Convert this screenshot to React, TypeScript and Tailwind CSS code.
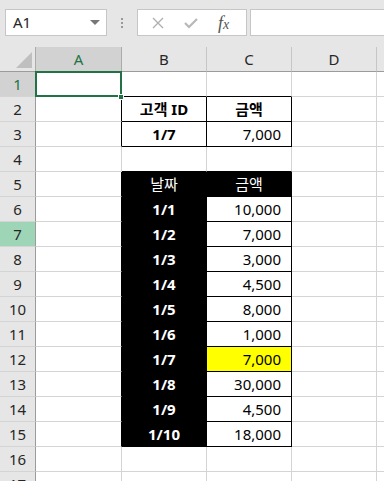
import React from "react";

const COLS = ["A", "B", "C", "D"];
const COL_W = [86, 85, 85, 85];
const ROW_COUNT = 16;

type Cell = { text?: string; bold?: boolean; align?: "center" | "right"; bg?: string; white?: boolean };

const data: Record<string, Cell> = {
  B2: { text: "고객 ID", bold: true, align: "center" },
  C2: { text: "금액", bold: true, align: "center" },
  B3: { text: "1/7", bold: true, align: "center" },
  C3: { text: "7,000", align: "right" },
  B5: { text: "날짜", align: "center", white: true },
  C5: { text: "금액", align: "center", white: true },
};

const dates = ["1/1", "1/2", "1/3", "1/4", "1/5", "1/6", "1/7", "1/8", "1/9", "1/10"];
const amounts = ["10,000", "7,000", "3,000", "4,500", "8,000", "1,000", "7,000", "30,000", "4,500", "18,000"];
dates.forEach((d, i) => {
  data["B" + (i + 6)] = { text: d, bold: true, align: "center", white: true };
  data["C" + (i + 6)] = { text: amounts[i], align: "right", bg: i === 6 ? "yellow" : undefined };
});

// c: 0=A .. 3=D, 4=E
const bordered = (r: number, c: number) =>
  (r >= 2 && r <= 3 && (c === 1 || c === 2)) || (r >= 6 && r <= 15 && c === 2);
const black = (r: number, c: number) =>
  (r === 5 && (c === 1 || c === 2)) || (r >= 6 && r <= 15 && c === 1);
const dark = (r: number, c: number) => bordered(r, c) || black(r, c);

function GridCell({ r, c }: { r: number; c: number }) {
  const key = COLS[c] + r;
  const cell = data[key] || {};
  const rightBlack = dark(r, c) || dark(r, c + 1);
  const bottomBlack = dark(r, c) || dark(r + 1, c);
  return (
    <div
      className={[
        "h-[25px] shrink-0 flex items-center border-r border-b text-[15px] leading-none",
        rightBlack ? "border-r-black" : "border-r-[#d4d4d4]",
        bottomBlack ? "border-b-black" : "border-b-[#d4d4d4]",
        black(r, c) ? "bg-black text-white" : cell.bg === "yellow" ? "bg-[#ffff00] text-black" : "bg-white text-black",
        cell.align === "right" ? "justify-end pr-[10px]" : "justify-center",
        cell.bold ? "font-bold" : "font-normal",
      ].join(" ")}
      style={{ width: COL_W[c] }}
    >
      {cell.text}
    </div>
  );
}

function Row({ r }: { r: number }) {
  const selected = r === 1;
  const green = r === 7;
  return (
    <div className="flex">
      <div
        className={[
          "w-[36px] h-[25px] shrink-0 flex items-center justify-center border-r border-r-[#9b9b9b] border-b border-b-[#d4d4d4] text-[15px]",
          selected ? "bg-[#d2d2d2] text-[#217346]" : green ? "bg-[#9fd5b7] text-[#262626]" : "bg-[#e6e6e6] text-[#262626]",
        ].join(" ")}
      >
        {r}
      </div>
      {COLS.map((_, c) => (
        <GridCell key={c} r={r} c={c} />
      ))}
      <div className="flex-1 h-[25px] border-b border-b-[#d4d4d4] bg-white" />
    </div>
  );
}

export default function App() {
  return (
    <div
      className="w-[384px] h-[481px] overflow-hidden bg-[#e6e6e6] relative"
      style={{ fontFamily: '"Noto Sans", "Noto Sans CJK KR", sans-serif' }}
    >
      {/* formula bar */}
      <div className="h-[47px] flex items-start pt-[9px] pl-[5px]">
        <div className="w-[102px] h-[27px] bg-white border border-[#c6c6c6] flex items-center justify-between pl-[7px] pr-[6px]">
          <span className="text-[15px] text-[#262626]">A1</span>
          <span className="w-0 h-0 border-l-[5px] border-r-[5px] border-t-[5px] border-l-transparent border-r-transparent border-t-[#777]" />
        </div>
        <div className="w-[30px] h-[27px] flex flex-col items-center justify-center gap-[2px]">
          <span className="w-[2px] h-[2px] bg-[#999]" />
          <span className="w-[2px] h-[2px] bg-[#999]" />
          <span className="w-[2px] h-[2px] bg-[#999]" />
        </div>
        <div className="w-[110px] h-[27px] bg-white border border-[#c6c6c6] flex items-center">
          <svg width="12" height="12" viewBox="0 0 12 12" className="ml-[14px]">
            <path d="M1 1 L11 11 M11 1 L1 11" stroke="#b0b0b0" strokeWidth="1.4" fill="none" />
          </svg>
          <svg width="14" height="12" viewBox="0 0 14 12" className="ml-[20px]">
            <path d="M1 6 L5 10 L13 2" stroke="#b8b8b8" strokeWidth="2.2" fill="none" />
          </svg>
          <span
            className="ml-[20px] text-[18px] italic text-[#555] leading-none"
            style={{ fontFamily: '"Liberation Serif", serif' }}
          >
            f<span className="text-[14px]">x</span>
          </span>
        </div>
        <div className="ml-[3px] flex-1 h-[27px] bg-white border border-[#c6c6c6] border-r-0" />
      </div>

      {/* column headers */}
      <div className="flex h-[25px]">
        <div className="w-[36px] h-[25px] shrink-0 border-r border-r-[#ababab] border-b border-b-[#9b9b9b] flex items-end justify-end p-[3px]">
          <span className="w-0 h-0 border-b-[16px] border-l-[16px] border-l-transparent border-b-[#bfbfbf]" />
        </div>
        {COLS.map((col, c) => (
          <div
            key={col}
            className={[
              "h-[25px] shrink-0 flex items-center justify-center border-r border-b text-[15px]",
              c === 0
                ? "bg-[#d2d2d2] text-[#217346] border-r-[#ababab] border-b-[#217346]"
                : "bg-[#e6e6e6] text-[#262626] border-r-[#c6c6c6] border-b-[#9b9b9b]",
            ].join(" ")}
            style={{ width: COL_W[c] }}
          >
            {col}
          </div>
        ))}
        <div className="flex-1 h-[25px] border-b border-b-[#9b9b9b] bg-[#e6e6e6]" />
      </div>

      {/* rows */}
      <div className="relative">
        {Array.from({ length: ROW_COUNT + 1 }, (_, i) => (
          <Row key={i} r={i + 1} />
        ))}
        {/* active cell */}
        <div className="absolute left-[35px] top-[-1px] w-[87px] h-[26px] border-2 border-[#217346]" />
        <div className="absolute left-[118px] top-[22px] w-[6px] h-[6px] bg-[#217346] border border-white" />
      </div>
    </div>
  );
}
